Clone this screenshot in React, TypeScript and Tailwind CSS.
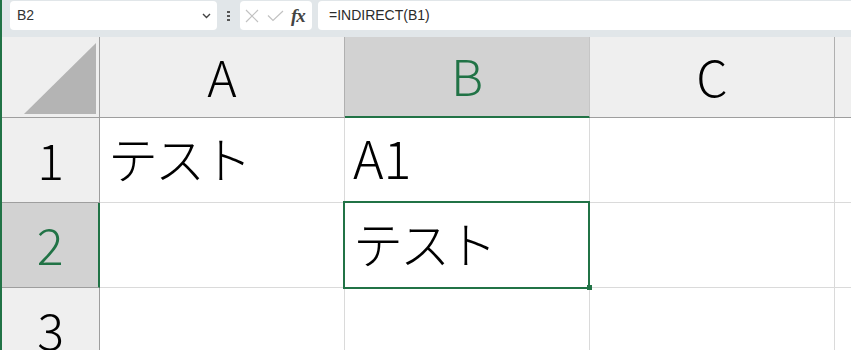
import React from "react";

const jp = { fontFamily: '"Noto Sans CJK JP", "Noto Sans", sans-serif' };
const ui = { fontFamily: '"Liberation Sans", Arial, sans-serif' };

const cols = ["A", "B", "C"];
const rows: { n: number; cells: string[] }[] = [
  { n: 1, cells: ["テスト", "A1", ""] },
  { n: 2, cells: ["", "テスト", ""] },
  { n: 3, cells: ["", "", ""] },
];

const Toolbar = () => (
  <div className="h-[37px] bg-[#e1e6e9] flex items-start pt-[1px]" style={ui}>
    {/* name box */}
    <div className="ml-[8px] w-[207px] h-[29px] bg-white rounded-[4px] flex items-center pl-[7px] pr-[6px]">
      <span className="text-[14px] text-[#333]">B2</span>
      <svg className="ml-auto" width="9" height="6" viewBox="0 0 9 6">
        <path d="M1 1 L4.5 4.5 L8 1" stroke="#444" strokeWidth="1.4" fill="none" />
      </svg>
    </div>
    <div className="w-[23px] h-[29px] flex flex-col items-center justify-center gap-[2px]">
      <span className="w-[3px] h-[2px] bg-[#555]" />
      <span className="w-[3px] h-[2px] bg-[#555]" />
      <span className="w-[3px] h-[2px] bg-[#555]" />
    </div>
    {/* cancel / enter / fx */}
    <div className="w-[72px] h-[29px] bg-white rounded-[4px] flex items-center pl-[5px] gap-[8px]">
      <svg width="14" height="14" viewBox="0 0 14 14">
        <path d="M1 1 L13 13 M13 1 L1 13" stroke="#c2c2c2" strokeWidth="1.2" />
      </svg>
      <svg width="17" height="12" viewBox="0 0 17 12">
        <path d="M1 5.5 L6 10.5 L16 1" stroke="#c2c2c2" strokeWidth="1.2" fill="none" />
      </svg>
      <span
        className="text-[19px] italic font-bold text-[#444] leading-none -ml-[1px] tracking-[-1px]"
        style={{ fontFamily: '"Liberation Serif", serif' }}
      >
        fx
      </span>
    </div>
    <div className="ml-[6px] flex-1 h-[29px] bg-white rounded-l-[4px] flex items-center pl-[11px]">
      <span className="text-[14px] text-[#2b2b2b]">=INDIRECT(B1)</span>
    </div>
  </div>
);

export default function App() {
  return (
    <div className="w-[851px] h-[350px] overflow-hidden bg-white border-l-2 border-[#217346]">
      <Toolbar />
      <div className="relative">
        <div className="grid grid-cols-[98px_245px_245px_245px_1fr]">
          {/* corner */}
          <div className="h-[81px] bg-[#efefef] border-r border-b border-[#9e9e9e] flex items-end justify-end p-[3px]">
            <svg width="72" height="71" viewBox="0 0 72 71">
              <polygon points="0,71 72,0 72,71" fill="#b4b4b4" />
            </svg>
          </div>
          {cols.map((c) => {
            const sel = c === "B";
            return (
              <div
                key={c}
                className={
                  sel
                    ? "h-[81px] bg-[#d2d2d2] border-r border-r-[#c6c6c6] border-b-2 border-b-[#217346] flex items-center justify-center text-[50px] font-light text-[#217346]"
                    : "h-[81px] bg-[#efefef] border-r border-r-[#b0b0b0] border-b border-b-[#9e9e9e] flex items-center justify-center text-[50px] font-light text-black"
                }
                style={jp}
              >
                <span className="-mt-[4px]">{c}</span>
              </div>
            );
          })}
          <div className="h-[81px] bg-[#efefef] border-b border-b-[#9e9e9e]" />

          {rows.map((r) => (
            <React.Fragment key={r.n}>
              <div
                className={
                  r.n === 2
                    ? "h-[85px] bg-[#d2d2d2] border-r-2 border-r-[#217346] border-b border-b-[#9e9e9e] flex items-center justify-center text-[50px] font-light text-[#217346]"
                    : "h-[85px] bg-[#efefef] border-r border-r-[#9e9e9e] border-b border-b-[#9e9e9e] flex items-center justify-center text-[50px] font-light text-black"
                }
                style={jp}
              >
                <span className="-mt-[4px]">{r.n}</span>
              </div>
              {r.cells.map((v, i) => (
                <div
                  key={i}
                  className="h-[85px] border-r border-b border-[#dadada] flex items-center pl-[8px] text-black whitespace-nowrap font-light"
                  style={jp}
                >
                  {v === "A1" ? (
                    <span className="-mt-[6px] text-[52px]">{v}</span>
                  ) : (
                    <span className="-mt-[6px] text-[50px] tracking-[-3px]">{v}</span>
                  )}
                </div>
              ))}
              <div className="h-[85px] border-b border-[#dadada]" />
            </React.Fragment>
          ))}
        </div>

        {/* selection box on B2 */}
        <div className="absolute left-[341px] top-[164px] w-[247px] h-[88px] border-2 border-[#217346]" />
        <div className="absolute left-[585px] top-[248px] w-[5px] h-[5px] bg-[#217346]" />
      </div>
    </div>
  );
}
